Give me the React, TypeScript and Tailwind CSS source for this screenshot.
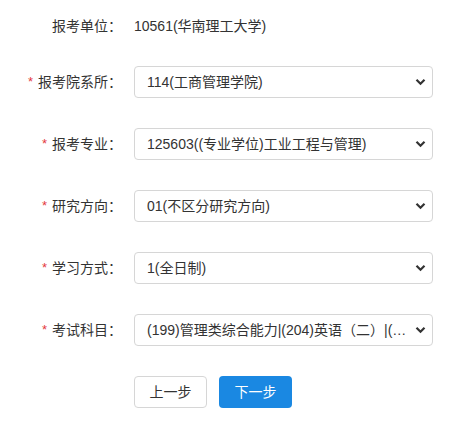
import React from 'react';

const font = { fontFamily: '"Liberation Sans", "Noto Sans CJK SC", sans-serif' };

function Chevron() {
  return (
    <svg width="11" height="8" viewBox="0 0 11 8" className="shrink-0">
      <path d="M1.5 1.8 L5.5 5.8 L9.5 1.8" fill="none" stroke="#333" strokeWidth="2.2" />
    </svg>
  );
}

function Field({ label, value }: { label: string; value: string }) {
  return (
    <div className="flex items-center h-8">
      <div className="w-[122px] flex justify-end items-center text-[14px] text-[#333]">
        <span className="text-[#e4393c] mr-[5px] text-[13px]">*</span>
        <span>{label}：</span>
      </div>
      <div className="ml-3 w-[299px] h-8 border border-[#d6d6d6] rounded-[4px] bg-white flex items-center pl-[12px] pr-[6px] gap-2">
        <span className="flex-1 truncate text-[14px] text-[#333]">{value}</span>
        <Chevron />
      </div>
    </div>
  );
}

const fields = [
  { label: '报考院系所', value: '114(工商管理学院)' },
  { label: '报考专业', value: '125603((专业学位)工业工程与管理)' },
  { label: '研究方向', value: '01(不区分研究方向)' },
  { label: '学习方式', value: '1(全日制)' },
  { label: '考试科目', value: '(199)管理类综合能力|(204)英语（二）|(--)无|(--)无' },
];

export default function App() {
  return (
    <div className="w-[456px] h-[445px] bg-white pt-[10px]" style={font}>
      <div className="flex items-center h-8">
        <div className="w-[122px] text-right text-[14px] text-[#333]">报考单位：</div>
        <div className="ml-3 text-[14px] text-[#333]">10561(华南理工大学)</div>
      </div>
      <div className="mt-6 flex flex-col gap-[30px]">
        {fields.map(f => (
          <Field key={f.label} label={f.label} value={f.value} />
        ))}
        <div className="flex gap-3 pl-[134px]">
          <button className="w-[73px] h-8 rounded-[4px] border border-[#d6d6d6] bg-white text-[14px] text-[#333]">上一步</button>
          <button className="w-[73px] h-8 rounded-[4px] bg-[#1a88e2] text-[14px] text-white">下一步</button>
        </div>
      </div>
    </div>
  );
}
